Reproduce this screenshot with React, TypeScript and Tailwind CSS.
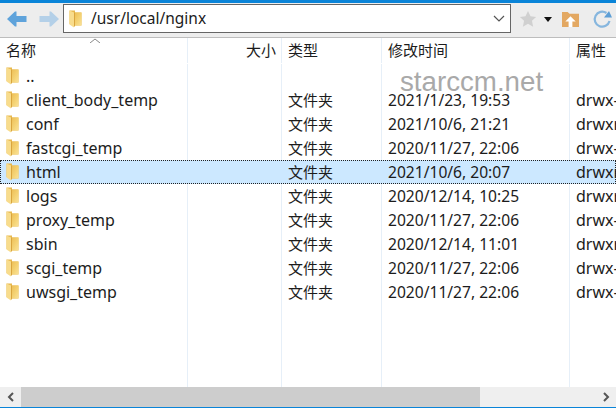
const rows = [
  ["..", "", "", ""],
  ["client_body_temp", "文件夹", "2021/1/23, 19:53", "drwx-"],
  ["conf", "文件夹", "2021/10/6, 21:21", "drwxr"],
  ["fastcgi_temp", "文件夹", "2020/11/27, 22:06", "drwx-"],
  ["html", "文件夹", "2021/10/6, 20:07", "drwxr"],
  ["logs", "文件夹", "2020/12/14, 10:25", "drwxr"],
  ["proxy_temp", "文件夹", "2020/11/27, 22:06", "drwx-"],
  ["sbin", "文件夹", "2020/12/14, 11:01", "drwxr"],
  ["scgi_temp", "文件夹", "2020/11/27, 22:06", "drwx-"],
  ["uwsgi_temp", "文件夹", "2020/11/27, 22:06", "drwx-"],
];

function Folder() {
  return (
    <svg viewBox="0 0 13 18" className="w-[13px] h-[18px] shrink-0">
      <defs>
        <linearGradient id="fg" x1="0" y1="0" x2="1" y2="1">
          <stop offset="0" stopColor="#ecbd52" />
          <stop offset="0.6" stopColor="#f5d477" />
          <stop offset="1" stopColor="#f9e29a" />
        </linearGradient>
      </defs>
      <path d="M0.5 0.5 L6 0.5 L6 2.5 L12.5 2.5 L12.5 15.5 L6 15.5 L0.5 14 Z" fill="#e8b94f" />
      <path d="M5 2.5 L12.5 2.5 L12.5 15.5 L5 15.5 Z" fill="url(#fg)" />
      <path d="M0.5 0.5 L5 2.5 L5 17.5 L0.5 14.5 Z" fill="#f8dc8c" />
      <path d="M5 2.5 L6 2.5 L6 16 L5 17 Z" fill="#d9a53f" />
    </svg>
  );
}

const cell = "h-full flex items-center border-r border-[#e6eff8]";
const cols = "grid grid-cols-[188px_94px_100px_188px_46px]";

export default function App() {
  return (
    <div className="w-[616px] h-[408px] flex flex-col overflow-hidden bg-white text-[15px] text-[#1c1c1c] font-['Noto_Sans','Noto_Sans_CJK_SC',sans-serif] relative">
      <div className="h-[3px] bg-[#0a84d8] shrink-0" />
      <div className="h-[35px] shrink-0 bg-[#ededed] border-b border-[#bdbdbd] flex items-start pt-[1px]">
        <div className="w-[63px] h-[30px] flex items-center pl-[7px] gap-[12px] shrink-0">
          <svg viewBox="0 0 20 16" className="w-[20px] h-[16px]"><path d="M0 8 L8 0.5 L9.5 0.5 L9.5 5 L19.5 5 L19.5 11 L9.5 11 L9.5 15.5 L8 15.5 Z" fill="#5fa3db" /></svg>
          <svg viewBox="0 0 20 16" className="w-[20px] h-[16px]"><path d="M20 8 L12 0.5 L10.5 0.5 L10.5 5 L0.5 5 L0.5 11 L10.5 11 L10.5 15.5 L12 15.5 Z" fill="#b4d0e8" /></svg>
        </div>
        <div className="w-[448px] h-[29px] shrink-0 bg-white border border-[#666] flex items-center pl-[5px] pr-[5px] text-[15.5px]">
          <Folder />
          <span className="ml-[9px] flex-1">/usr/local/nginx</span>
          <svg viewBox="0 0 12 8" className="w-[12px] h-[8px]"><path d="M1 1 L6 6 L11 1" fill="none" stroke="#555" strokeWidth="1.2" /></svg>
        </div>
        <div className="flex items-center h-[30px] pl-[8px] shrink-0">
          <svg viewBox="0 0 20 20" className="w-[18px] h-[18px]"><path d="M10 1 L12.8 7 L19 7.7 L14.4 12 L15.7 18.5 L10 15.2 L4.3 18.5 L5.6 12 L1 7.7 L7.2 7 Z" fill="#d0d0d0" /></svg>
          <svg viewBox="0 0 10 6" className="w-[8px] h-[5px] ml-[7px]"><path d="M0 0 L10 0 L5 6 Z" fill="#111" /></svg>
          <svg viewBox="0 0 20 18" className="w-[19px] h-[17px] ml-[9px]">
            <path d="M1 1 L7 1 L9 3 L19 3 L19 17 L1 17 Z" fill="#e3a862" />
            <path d="M10 5.5 L15.5 11 L12 11 L12 17 L8 17 L8 11 L4.5 11 Z" fill="#fff" />
          </svg>
          <svg viewBox="0 0 20 20" className="w-[20px] h-[20px] ml-[12px]">
            <path d="M14.5 4 A7.5 7.5 0 1 0 17.5 12" fill="none" stroke="#86b6de" strokeWidth="2.2" />
            <path d="M12 8.5 L20 8.5 L17 2 Z" fill="#5e9fd6" />
          </svg>
        </div>
      </div>
      <div className={cols + " h-[25px] shrink-0 relative"}>
        <div className={cell + " pl-[6px]"}>名称</div>
        <div className={cell + " justify-end pr-[5px]"}>大小</div>
        <div className={cell + " pl-[6px]"}>类型</div>
        <div className={cell + " pl-[6px]"}>修改时间</div>
        <div className="h-full flex items-center pl-[6px]">属性</div>
        <svg viewBox="0 0 10 5" className="absolute left-[90px] top-0 w-[10px] h-[5px]"><path d="M0 5 L5 1 L10 5" fill="none" stroke="#888" strokeWidth="1" /></svg>
      </div>
      <div className="flex-1 flex flex-col min-h-0 pt-px">
        {rows.map(([name, type, date, attr]) => {
          const sel = name === "html";
          const c = sel ? "h-full flex items-center" : cell;
          return (
            <div key={name} className={cols + " h-[24px] shrink-0 " + (sel ? "bg-[#cce8ff] outline-1 outline-dotted outline-[#222] -outline-offset-1" : "")}>
              <div className={c + " pl-[6px] text-[16px]"}><Folder /><span className="ml-[7px]">{name}</span></div>
              <div className={c} />
              <div className={c + " pl-[6px]"}>{type}</div>
              <div className={c + " pl-[6px] pt-px whitespace-nowrap text-[15.6px]"}>{date}</div>
              <div className="h-full flex items-center pl-[6px] whitespace-nowrap overflow-hidden text-[16px]">{attr}</div>
            </div>
          );
        })}
        <div className={cols + " flex-1"}>
          <div className={cell} />
          <div className={cell} />
          <div className={cell} />
          <div className={cell} />
          <div />
        </div>
      </div>
      <div className="h-[20px] shrink-0 bg-[#efefef] flex items-stretch">
        <div className="w-[21px] flex items-center justify-center">
          <svg viewBox="0 0 8 10" className="w-[8px] h-[10px]"><path d="M6 1 L2 5 L6 9" fill="none" stroke="#555" strokeWidth="2" /></svg>
        </div>
        <div className="w-[459px] bg-[#cdcdcd]" />
        <div className="flex-1" />
        <div className="w-[21px] flex items-center justify-center">
          <svg viewBox="0 0 8 10" className="w-[8px] h-[10px]"><path d="M2 1 L6 5 L2 9" fill="none" stroke="#555" strokeWidth="2" /></svg>
        </div>
      </div>
      <div className="h-px shrink-0 bg-[#0a84d8]" />
      <span className="absolute left-[400px] top-[66px] text-[27.7px] leading-[32px] text-[#a9a9a9] font-['Liberation_Sans',sans-serif]">starccm.net</span>
    </div>
  );
}
